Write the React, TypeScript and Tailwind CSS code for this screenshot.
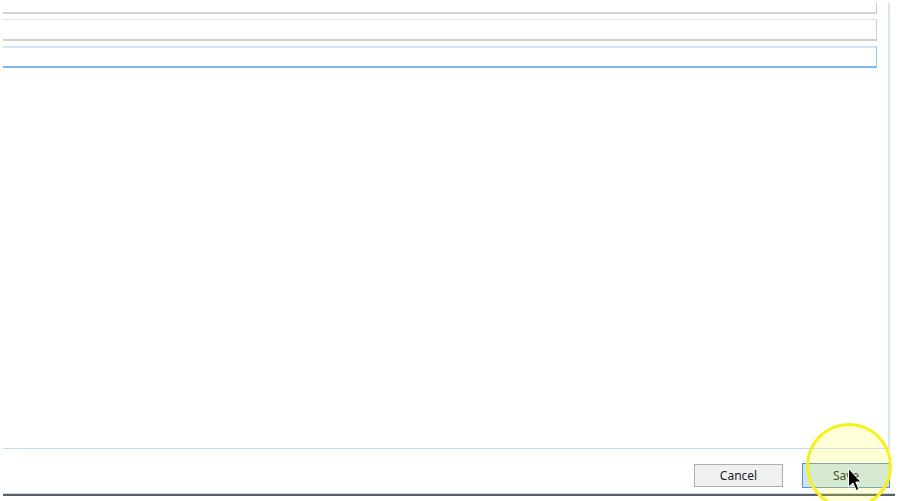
import React from "react";

export default function App() {
  return (
    <div className="relative w-[900px] h-[501px] bg-white overflow-hidden font-['Segoe_UI','Noto_Sans','Liberation_Sans',sans-serif] text-[12px] text-[#1e1e1e]">
      {/* main panel */}
      <div className="ml-[3px] mt-[3px] w-[887px] h-[446px] border-r-2 border-b border-r-[#d6e5f8] border-b-[#c6daf2] flex flex-col">
        <div className="w-[874px] h-[11px] border-r border-b-2 border-r-[#cfcfcf] border-b-[#d4d4d4]" />
        <div className="mt-[5px] w-[874px] h-[22px] border-t border-r border-b-2 border-t-[#e2e2e2] border-r-[#cfcfcf] border-b-[#cfcfcf]" />
        <div className="mt-[5px] w-[874px] h-[22px] border-t-2 border-r border-b-2 border-t-[#d3e3f7] border-r-[#9cc3ee] border-b-[#86b6ec]" />
      </div>

      {/* buttons */}
      <div className="flex justify-end gap-[19px] pr-[10px] pt-[15px]">
        <button className="w-[89px] h-[23px] bg-[#f0f0f0] border border-[#adadad] flex items-center justify-center leading-none">
          Cancel
        </button>
        <button className="w-[88px] h-[25px] -mt-[1px] bg-[#cce4f7] border border-[#5b93c9] flex items-center justify-center leading-none">
          Save
        </button>
      </div>

      {/* bottom rule */}
      <div className="absolute left-[3px] top-[493px] w-[892px] h-[1px] bg-[#c6dcef]" />
      <div className="absolute left-[3px] top-[494px] w-[892px] h-[2px] bg-[#5c5f63]" />

      {/* click highlight */}
      <div className="absolute left-[806px] top-[423px] w-[86px] h-[86px] rounded-full border-[3px] border-[#f6f01c] bg-[#ffff3c]/20" />

      {/* cursor */}
      <svg className="absolute left-[847px] top-[467px]" width="16" height="26" viewBox="0 0 16 26">
        <path d="M1.5 1.5 L1.5 20 L6 16 L9.2 23.5 L12 22.3 L8.8 15 L14 15 Z" fill="#000" stroke="#fff" strokeWidth="1" strokeLinejoin="round" />
      </svg>
    </div>
  );
}
